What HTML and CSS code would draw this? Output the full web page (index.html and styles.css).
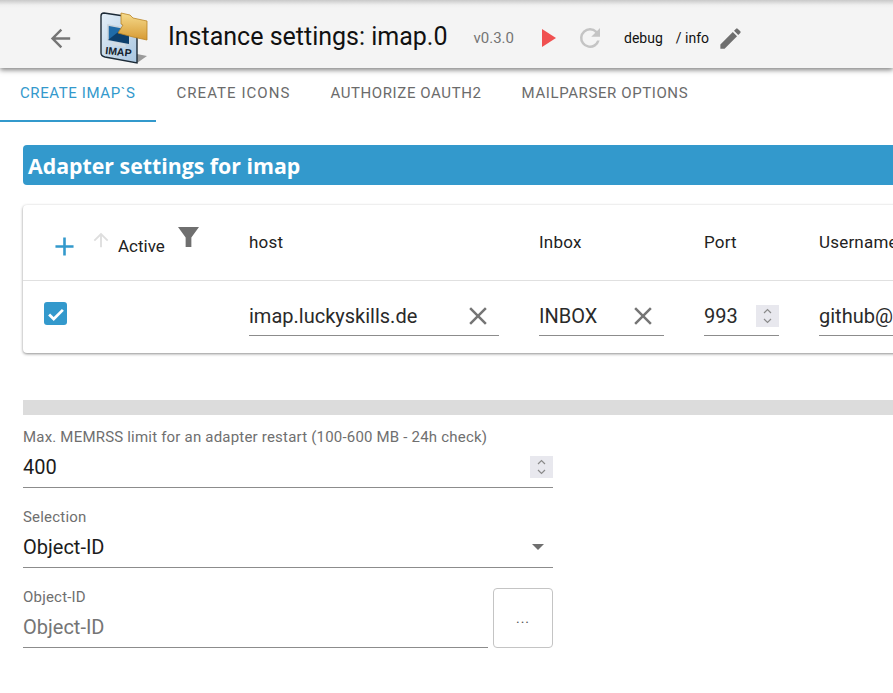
FILE: index.html
```html
<!DOCTYPE html>
<html lang="en">
<head>
    <meta charset="UTF-8">
    <meta name="viewport" content="width=device-width, initial-scale=1.0">
    <title>Instance settings: imap.0</title>
    <link rel="stylesheet" href="styles.css">
</head>
<body>
    <header class="toolbar">
        <svg class="back-icon" viewBox="0 0 24 24"><path d="M20 11H7.83l5.59-5.59L12 4l-8 8 8 8 1.41-1.41L7.83 13H20v-2z"/></svg>
        <svg class="logo" viewBox="0 0 48 52">
            <defs>
                <linearGradient id="page" x1="0" y1="0" x2="1" y2="1"><stop offset="0" stop-color="#e4eff8"/><stop offset="1" stop-color="#a9c6e0"/></linearGradient>
                <linearGradient id="folder" x1="0" y1="0" x2="0" y2="1"><stop offset="0" stop-color="#f6dc8e"/><stop offset="1" stop-color="#d79a33"/></linearGradient>
            </defs>
            <path d="M37 51 L47 44 L37 42z" fill="#9a9a9a"/>
            <path d="M4 1 L24 4 L37 11 L37 51 L5 45 Q1 44 1 41 L1 4 Q1 1 4 1z" fill="url(#page)" stroke="#1c2a36" stroke-width="1.4"/>
            <path d="M8 13 L29 17 L29 32 L8 28z" fill="#1f6ba8" stroke="#c8d2da" stroke-width="1.5"/>
            <path d="M8 28 L22 17 L29 18 L29 32z" fill="#0d3f6c"/>
            <path d="M13 30 L25 32 L26 35 L12 33z" fill="#d3dbe2"/>
            <path d="M21 1 L30 3 L33 6 L47 9 L47 28 L33 25 L18 21 L23 13 L21 12z" fill="url(#folder)" stroke="#b98424" stroke-width=".8"/>
            <text class="logo-text" x="5" y="42" transform="rotate(6 5 42)">IMAP</text>
        </svg>
        <h1 class="instance-title">Instance settings: imap.0</h1>
        <span class="version">v0.3.0</span>
        <svg class="play-icon" viewBox="0 0 14 18"><path d="M0 0 L14 9 L0 18z"/></svg>
        <svg class="reload-icon" viewBox="0 0 24 24"><path d="M17.65 6.35A7.95 7.95 0 0 0 12 4a8 8 0 1 0 7.73 10h-2.08A6 6 0 1 1 12 6c1.66 0 3.14.69 4.22 1.78L13 11h7V4l-2.35 2.35z"/></svg>
        <span class="log-level">debug</span>
        <span class="log-level log-level-sep">/ info</span>
        <svg class="edit-icon" viewBox="0 0 24 24"><path d="M3 17.25V21h3.75L17.81 9.94l-3.75-3.75L3 17.25zM20.71 7.04a1 1 0 0 0 0-1.41l-2.34-2.34a1 1 0 0 0-1.41 0l-1.83 1.83 3.75 3.75 1.83-1.83z"/></svg>
    </header>

    <nav class="tabs">
        <a class="tab active">CREATE IMAP`S</a>
        <a class="tab tab-icons">CREATE ICONS</a>
        <a class="tab">AUTHORIZE OAUTH2</a>
        <a class="tab">MAILPARSER OPTIONS</a>
    </nav>

    <main class="content">
        <h2 class="section-title">Adapter settings for imap</h2>

        <section class="table-card">
            <div class="table-row table-head">
                <div class="col col-active">
                    <svg class="add-icon" viewBox="0 0 24 24"><path d="M19 13h-6v6h-2v-6H5v-2h6V5h2v6h6v2z"/></svg>
                    <svg class="sort-icon" viewBox="0 0 24 24"><path d="M4 12l1.41 1.41L11 7.83V20h2V7.83l5.58 5.59L20 12l-8-8-8 8z"/></svg>
                    <span class="active-label">Active</span>
                    <svg class="filter-icon" viewBox="0 0 22 22"><path d="M0 0 H22 L14 11 V21 H8 V11z"/></svg>
                </div>
                <div class="col col-host">host</div>
                <div class="col col-inbox">Inbox</div>
                <div class="col col-port">Port</div>
                <div class="col col-user">Username</div>
            </div>
            <div class="table-row table-body">
                <div class="col col-active">
                    <span class="checkbox"><svg viewBox="0 0 24 24"><path d="M4.5 12.5l5 5 10-10" /></svg></span>
                </div>
                <div class="col col-host">
                    <div class="cell-input">
                        <span class="cell-value">imap.luckyskills.de</span>
                        <svg class="clear-icon" viewBox="0 0 24 24"><path d="M19 6.41L17.59 5 12 10.59 6.41 5 5 6.41 10.59 12 5 17.59 6.41 19 12 13.41 17.59 19 19 17.59 13.41 12z"/></svg>
                    </div>
                </div>
                <div class="col col-inbox">
                    <div class="cell-input">
                        <span class="cell-value">INBOX</span>
                        <svg class="clear-icon" viewBox="0 0 24 24"><path d="M19 6.41L17.59 5 12 10.59 6.41 5 5 6.41 10.59 12 5 17.59 6.41 19 12 13.41 17.59 19 19 17.59 13.41 12z"/></svg>
                    </div>
                </div>
                <div class="col col-port">
                    <div class="cell-input">
                        <span class="cell-value">993</span>
                        <span class="spinner"><svg viewBox="0 0 23 22"><path d="M8 8l3.5-3.5L15 8M8 14l3.5 3.5L15 14"/></svg></span>
                    </div>
                </div>
                <div class="col col-user">
                    <div class="cell-input"><span class="cell-value">github@luckyskills.de</span></div>
                </div>
            </div>
        </section>

        <div class="divider"></div>

        <div class="form-field">
            <label class="field-label">Max. MEMRSS limit for an adapter restart (100-600 MB - 24h check)</label>
            <div class="field-input">
                <span class="field-value">400</span>
                <span class="spinner"><svg viewBox="0 0 23 22"><path d="M8 8l3.5-3.5L15 8M8 14l3.5 3.5L15 14"/></svg></span>
            </div>
        </div>

        <div class="form-field">
            <label class="field-label">Selection</label>
            <div class="field-input">
                <span class="field-value">Object-ID</span>
                <span class="select-arrow"></span>
            </div>
        </div>

        <div class="object-row">
            <div class="form-field">
                <label class="field-label">Object-ID</label>
                <div class="field-input">
                    <span class="field-value placeholder">Object-ID</span>
                </div>
            </div>
            <button class="pick-button">...</button>
        </div>
    </main>
</body>
</html>
```

FILE: styles.css
```css
* {
    box-sizing: border-box;
}

html,
body {
    height: 100%;
}

body {
    margin: 0;
    overflow: hidden;
    background: #fff;
    color: #1f1f1f;
    font-family: Roboto, "Liberation Sans", sans-serif;
}

svg {
    display: block;
    flex: none;
}

/* top bar */
.toolbar {
    display: flex;
    align-items: center;
    height: 68px;
    padding: 8px 0 0 46px;
    background: linear-gradient(#c9c9c9 0, #efefef 5px, #f4f4f4 8px);
    box-shadow: 0 2px 5px rgba(0, 0, 0, 0.5);
    position: relative;
}

.back-icon {
    width: 29px;
    height: 29px;
    fill: #757575;
    margin-right: 25px;
}

.logo {
    width: 48px;
    height: 52px;
    margin-right: 20px;
}

.logo-text {
    font-size: 10.5px;
    font-weight: 700;
    fill: #14222e;
    font-family: "Liberation Sans", sans-serif;
}

.instance-title {
    margin: 0 26px 4px 0;
    font-size: 25px;
    font-weight: 400;
    color: #111;
}

.version {
    font-size: 15px;
    color: #757575;
    margin-right: 28px;
}

.play-icon {
    width: 14px;
    height: 18px;
    fill: #f05050;
    margin-right: 19px;
}

.reload-icon {
    width: 30px;
    height: 30px;
    fill: #c4c4c4;
    margin-right: 19px;
}

.log-level {
    font-size: 14px;
    color: #111;
}

.log-level-sep {
    margin-left: 13px;
}

.edit-icon {
    width: 27px;
    height: 27px;
    fill: #6f6f6f;
    margin-left: 8px;
}

/* tabs */
.tabs {
    display: flex;
    height: 54px;
}

.tab {
    display: flex;
    align-items: flex-start;
    justify-content: center;
    padding: 16px 20px 0;
    font-size: 15px;
    letter-spacing: 0.6px;
    color: #6b6b6b;
}

.tab.active {
    padding-right: 21px;
    color: #3399cc;
    border-bottom: 2px solid #3399cc;
}

.tab-icons {
    letter-spacing: 1.05px;
}

.content {
    padding: 23px 0 0 23px;
    width: 960px;
}

.section-title {
    margin: 0 0 20px;
    height: 40px;
    padding-left: 5px;
    line-height: 42px;
    background: #3399cc;
    border-radius: 4px 0 0 4px;
    color: #fff;
    font-family: "Open Sans", sans-serif;
    font-size: 21.3px;
    font-weight: 700;
}

/* table */
.table-card {
    width: 1000px;
    height: 148px;
    border-radius: 4px;
    box-shadow: 0 1px 3px rgba(0, 0, 0, 0.45);
}

.table-row {
    display: grid;
    grid-template-columns: 226px 290px 165px 115px 1fr;
}

.table-head {
    height: 76px;
    border-bottom: 1px solid #e0e0e0;
    font-size: 17px;
    letter-spacing: 0.2px;
    color: #222;
}

.table-body {
    height: 72px;
}

.table-head .col {
    padding-top: 27px;
}

.table-head .col-active {
    padding: 0;
    position: relative;
}

.add-icon {
    position: absolute;
    left: 26px;
    top: 26px;
    width: 31px;
    height: 31px;
    fill: #3399cc;
}

.sort-icon {
    position: absolute;
    left: 67px;
    top: 24px;
    width: 22px;
    height: 22px;
    fill: #dedede;
}

.active-label {
    position: absolute;
    left: 95px;
    top: 31px;
    letter-spacing: 0;
    color: #222;
}

.filter-icon {
    position: absolute;
    left: 155px;
    top: 22px;
    width: 21px;
    height: 21px;
    fill: #6f6f6f;
}

.checkbox {
    display: flex;
    align-items: center;
    justify-content: center;
    width: 23px;
    height: 23px;
    margin: 21px 0 0 21px;
    background: #3399cc;
    border-radius: 3px;
}

.checkbox svg {
    width: 22px;
    height: 22px;
    fill: none;
    stroke: #fff;
    stroke-width: 3;
}

.cell-input {
    display: flex;
    align-items: center;
    justify-content: space-between;
    height: 32px;
    margin-top: 23px;
    padding-bottom: 8px;
    border-bottom: 1px solid #8c8c8c;
    font-size: 20px;
    color: #2a2a2a;
    white-space: nowrap;
    overflow: hidden;
}

.col-host .cell-input {
    width: 250px;
}

.col-inbox .cell-input {
    width: 125px;
}

.col-port .cell-input {
    width: 75px;
}

.clear-icon {
    width: 30px;
    height: 30px;
    fill: #757575;
    margin-right: 6px;
}

.spinner {
    display: flex;
    align-items: center;
    justify-content: center;
    width: 23px;
    height: 22px;
    background: #e8e8ee;
}

.spinner svg {
    width: 23px;
    height: 22px;
    fill: none;
    stroke: #8a8a8a;
    stroke-width: 1.2;
}

.divider {
    height: 15px;
    margin-top: 47px;
    background: #dcdcdc;
}

/* form fields */
.form-field {
    width: 530px;
    height: 60px;
    margin-bottom: 20px;
}

.divider + .form-field {
    margin-top: 13px;
}

.field-label {
    display: block;
    height: 22px;
    font-size: 15px;
    letter-spacing: 0.2px;
    line-height: 18px;
    color: #6f6f6f;
}

.field-input {
    display: flex;
    align-items: center;
    justify-content: space-between;
    height: 38px;
    padding-bottom: 4px;
    border-bottom: 1px solid #8c8c8c;
}

.field-value {
    font-size: 20px;
    color: #1c1c1c;
}

.placeholder {
    color: #757575;
}

.select-arrow {
    width: 0;
    height: 0;
    margin-right: 9px;
    border-left: 6px solid transparent;
    border-right: 6px solid transparent;
    border-top: 6px solid #6f6f6f;
}

.object-row {
    display: flex;
    align-items: flex-start;
    gap: 5px;
    width: 530px;
}

.object-row .form-field {
    width: 465px;
}

.pick-button {
    width: 60px;
    height: 60px;
    background: #fff;
    border: 1px solid #c4c4c4;
    border-radius: 4px;
    color: #555;
    font-family: inherit;
    font-size: 14px;
    letter-spacing: 1px;
}
```
